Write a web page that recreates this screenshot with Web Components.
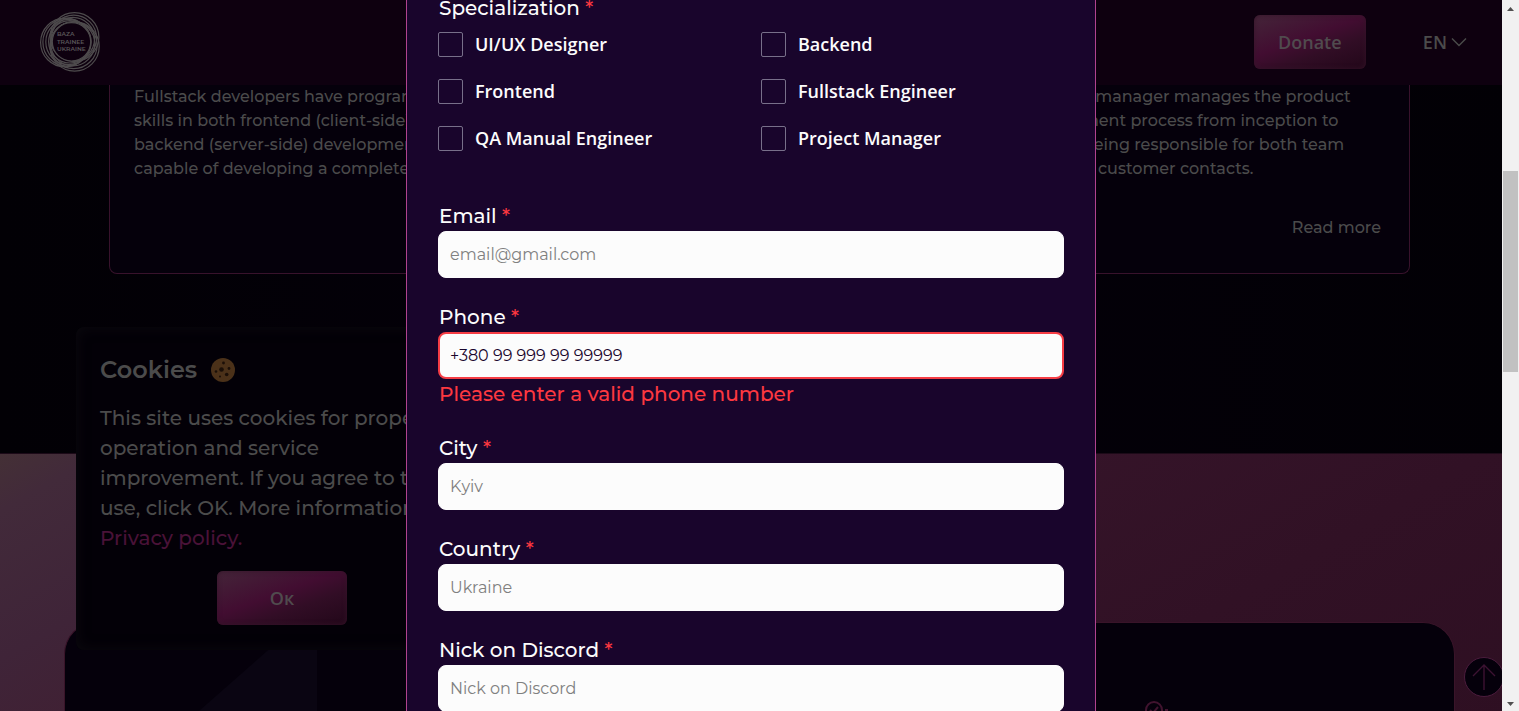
<!DOCTYPE html>
<html lang="en">
<head>
<meta charset="utf-8">
<title>Baza Trainee Ukraine</title>
<style>
html, body { margin: 0; height: 100%; overflow: hidden; background: #020005; }
body { font-family: Montserrat, Inter, sans-serif; font-weight: 500; color: #4b4b4b; --ui: "Open Sans", sans-serif; }
</style>
</head>
<body>
<baza-page></baza-page>
<script>
function define(name, css, html, setup) {
  const template = document.createElement('template');
  template.innerHTML = `<style>*{box-sizing:border-box}${css}</style>${html}`;
  customElements.define(name, class extends HTMLElement {
    constructor() {
      super();
      this.attachShadow({ mode: 'open' }).append(template.content.cloneNode(true));
    }
    connectedCallback() { if (setup) setup(this, this.shadowRoot); }
  });
}

define('baza-logo', `
  :host { display: block; width: 60px; height: 60px; }
  svg { display: block; }
  circle { fill: none; stroke: #4e4b4d; stroke-width: 1.2; }
  text { font: 600 6px Montserrat, sans-serif; fill: #5a5759; }`, `
  <svg width="60" height="60" viewBox="0 0 60 60" role="img" aria-label="Baza Trainee Ukraine">
    <circle cx="34.5" cy="25" r="24.4"/><circle cx="33.7" cy="26" r="22.9"/><circle cx="32.9" cy="27" r="21.6"/>
    <circle cx="25" cy="30.5" r="24.4"/><circle cx="26.7" cy="30.2" r="23.8"/><circle cx="28.4" cy="30" r="22.6"/><circle cx="29.8" cy="29.8" r="21.2"/>
    <circle cx="34.6" cy="34.5" r="24.6"/><circle cx="33.7" cy="33.2" r="23.4"/><circle cx="32.8" cy="31.8" r="22"/>
    <circle cx="31.5" cy="29.8" r="19.2" style="fill:#0e000f"/>
    <text x="17" y="24">BAZA</text><text x="17" y="32">TRAINEE</text><text x="17" y="39">UKRAINE</text>
  </svg>`);

define('baza-button', `
  :host { display: block; }
  button { width: 100%; height: 54px; border: 0; border-radius: 6px; color: #504b4e; font: 600 18px/24px var(--ui);
    background: linear-gradient(160deg, #442539 0%, #420d31 44%, #310d25 66%, #220719 100%);
    box-shadow: inset 0 0 5px #351429; }`,
  `<button type="button"><slot></slot></button>`);

define('baza-header', `
  :host { display: flex; flex: none; align-items: center; height: 85px; padding: 0 52px 1px 40px; background: #0e000f; }
  baza-button { width: 112px; margin: 0 57px 0 auto; }
  .lang { display: flex; align-items: center; gap: 4px; padding: 0; border: 0; background: none; color: #4b4b4b; font: 600 18px/24px var(--ui); }`, `
  <baza-logo></baza-logo>
  <baza-button>Donate</baza-button>
  <button class="lang" type="button">EN
    <svg width="16" height="10" viewBox="0 0 16 10" fill="none" stroke="#4b4b4b" stroke-width="1.4"><path d="M1 1.5 8 8.5 15 1.5"/></svg>
  </button>`);

define('role-card', `
  :host { display: flex; flex-direction: column; height: 189px; padding: 0 28px 33px 24px; border: solid #38122c; border-width: 0 1px 1px; border-radius: 0 0 8px 8px;
    background: #05000b; font-size: 16px; line-height: 24px; white-space: nowrap; }
  p { margin: 0; }
  ::slotted(a) { margin-top: auto; align-self: flex-end; color: inherit; text-decoration: none; }`, `
  <p><slot></slot></p><slot name="more"></slot>`);

define('role-list', `
  :host { display: grid; flex: none; grid-template-columns: repeat(3, minmax(0, 1fr)); gap: 24px; width: calc(100% - 218px); max-width: 1301px; margin: 0 auto 179px; }`, `
  <role-card>Fullstack developers have programming<br>skills in both frontend (client-side) and<br>backend (server-side) development,<br>capable of developing a complete product.</role-card>
  <role-card></role-card>
  <role-card>A project manager manages the product<br>development process from inception to<br>release, being responsible for both team<br>work and customer contacts.<a slot="more" href="#more">Read more</a></role-card>`);

define('promo-section', `
  :host { display: flex; flex: 1; padding: 168px 64px 0; border-top: 1px solid #1c0a18;
    background: linear-gradient(150deg, #443036 0%, #422a3a 5%, #3f2438 18%, #402033 28%, #351429 52%, #311125 75%, #2e0f22 100%); }
  .panel { flex: 1; display: flex; justify-content: space-between; padding: 0 284px 0 134px; overflow: hidden;
    border: 1px solid #391429; border-bottom: 0; border-radius: 32px 32px 0 0; background: #05000b; }
  .check { margin-top: 77px; flex: none; }`, `
  <div class="panel">
    <svg width="118" height="88" viewBox="0 0 118 88"><path d="M0 88 100 0H118V88Z" fill="#0a0512"/></svg>
    <svg class="check" width="26" height="20" viewBox="0 0 26 20" fill="none" stroke="#41132f" stroke-width="2"><circle cx="10" cy="10" r="8"/><path d="m6 10 3 3 5-6M21 10h3"/></svg>
  </div>`);

define('cookie-icon', `:host { display: block; } svg { display: block; }`, `
  <svg width="24" height="24" viewBox="0 0 24 24" aria-hidden="true"><circle cx="12" cy="12" r="12" fill="#4b3119"/>
  <g fill="#1b0f08"><circle cx="10.5" cy="11.5" r="2.3"/><circle cx="12.5" cy="5" r="1.4"/><circle cx="18" cy="10.5" r="1.4"/><circle cx="15.7" cy="16.5" r="1.8"/><circle cx="5" cy="13.5" r="1.3"/><circle cx="9" cy="18.5" r="1"/></g></svg>`);

define('cookie-banner', `
  :host { display: block; position: absolute; left: 76px; bottom: 61px; width: 412px; padding: 24px 24px 25px; border-radius: 8px;
    background: #030007; box-shadow: inset 0 0 14px #0c090f; font-size: 20px; line-height: 30px; white-space: nowrap; }
  h2 { display: flex; align-items: center; gap: 14px; margin: 0 0 15px; font-size: 24px; line-height: 37px; font-weight: 600; }
  p { margin: 0 0 18px; }
  a { color: #4a1238; text-decoration: none; }
  baza-button { width: 130px; margin: 0 auto; }`, `
  <h2>Cookies <cookie-icon></cookie-icon></h2>
  <p>This site uses cookies for proper<br>operation and service<br>improvement. If you agree to their<br>use, click OK. More information:<br><a href="#privacy">Privacy policy.</a></p>
  <baza-button>Ок</baza-button>`);

define('scroll-top', `
  :host { display: block; position: absolute; right: 15px; bottom: 14px; }
  button { display: grid; place-items: center; width: 40px; height: 40px; padding: 0; border: 1px solid #4b1c3d; border-radius: 50%; background: #05000b; }`, `
  <button type="button" aria-label="Back to top"><svg width="24" height="28" viewBox="0 0 24 28" fill="none" stroke="#3d1232" stroke-width="1.4"><path d="M12 27V2M1 13 12 2 23 13"/></svg></button>`);

define('check-option', `
  :host { display: block; }
  label { display: flex; align-items: center; gap: 12px; height: 25px; font: 600 18px/25px var(--ui); color: #fcfcfc; }
  input { appearance: none; width: 25px; height: 25px; margin: 0; border: 1px solid #78708a; border-radius: 2px; }`, `
  <label><input type="checkbox"><slot></slot></label>`);

define('text-field', `
  :host { display: block; margin-bottom: 24px; font-size: 20px; line-height: 30px; }
  label { display: block; padding-left: 1px; color: #fcfcfc; }
  span, p { color: #fd3840; }
  input { display: block; width: 100%; height: 47px; padding: 0 11px; border: 1px solid #fcfcfc; border-radius: 8px;
    background: #fcfcfc; color: #19052c; font: 400 16px/24px Montserrat, Inter, sans-serif; outline: 0; }
  input::placeholder { color: #808080; opacity: 1; }
  p { margin: 0; padding-left: 1px; }
  p:empty { display: none; }
  :host([error]) input { border: 2px solid #f63d45; padding: 0 10px; }`, `
  <label for="box"><slot></slot> <span>*</span></label><input id="box"><p></p>`,
  (host, root) => {
    const box = root.querySelector('input');
    box.type = host.getAttribute('type') || 'text';
    box.placeholder = host.getAttribute('placeholder') || '';
    box.value = host.getAttribute('value') || '';
    root.querySelector('p').textContent = host.getAttribute('error') || '';
  });

define('signup-form', `
  :host { display: block; width: 690px; max-width: 100%; padding: 0 32px; background: #19052c; box-shadow: inset 1px 0 #b0438f, inset -1px 0 #b0438f; overflow: hidden; }
  fieldset { margin: -7px 0 50px; padding: 0; border: 0; }
  legend { padding: 0 0 0 1px; margin-bottom: 9px; color: #fcfcfc; font-size: 20px; line-height: 30px; }
  legend span { color: #fd3840; }
  .options { display: grid; grid-template-columns: 1fr 1fr; gap: 22px 20px; }`, `
  <form>
  <fieldset><legend>Specialization <span>*</span></legend>
    <div class="options">
      <check-option>UI/UX Designer</check-option><check-option>Backend</check-option>
      <check-option>Frontend</check-option><check-option>Fullstack Engineer</check-option>
      <check-option>QA Manual Engineer</check-option><check-option>Project Manager</check-option>
    </div>
  </fieldset>
  <text-field type="email" placeholder="email@gmail.com">Email</text-field>
  <text-field type="tel" value="+380 99 999 99 99999" error="Please enter a valid phone number">Phone</text-field>
  <text-field placeholder="Kyiv">City</text-field>
  <text-field placeholder="Ukraine">Country</text-field>
  <text-field placeholder="Nick on Discord">Nick on Discord</text-field>
  </form>`);

define('scroll-rail', `
  :host { display: flex; flex-direction: column; align-items: center; width: 17px; padding: 7px 0 5px; background: #f1f1f1; }
  svg { flex: none; }
  .track { flex: 1; width: 15px; display: flex; flex-direction: column; }
  .before { flex: 160 1 0; } .thumb { flex: 201 1 0; background: #c1c1c1; } .after { flex: 330 1 0; }`, `
  <svg width="7" height="4"><path d="M0 4 3.5 0 7 4Z" fill="#505050"/></svg>
  <div class="track"><div class="before"></div><div class="thumb"></div><div class="after"></div></div>
  <svg width="7" height="4"><path d="M0 0 3.5 4 7 0Z" fill="#505050"/></svg>`);

define('modal-layer', `
  :host { position: absolute; inset: 0; display: flex; overflow: hidden; }
  main { flex: 1; display: flex; justify-content: center; min-width: 0; }`, `
  <main><slot></slot></main><scroll-rail></scroll-rail>`);

define('baza-page', `
  :host { position: relative; display: flex; flex-direction: column; height: 100vh; overflow: hidden; background: linear-gradient(90deg, #020005, #04000a 50%, #020005); }`, `
  <baza-header></baza-header>
  <role-list></role-list>
  <promo-section></promo-section>
  <cookie-banner></cookie-banner>
  <scroll-top></scroll-top>
  <modal-layer><signup-form></signup-form></modal-layer>`);
</script>
</body>
</html>
